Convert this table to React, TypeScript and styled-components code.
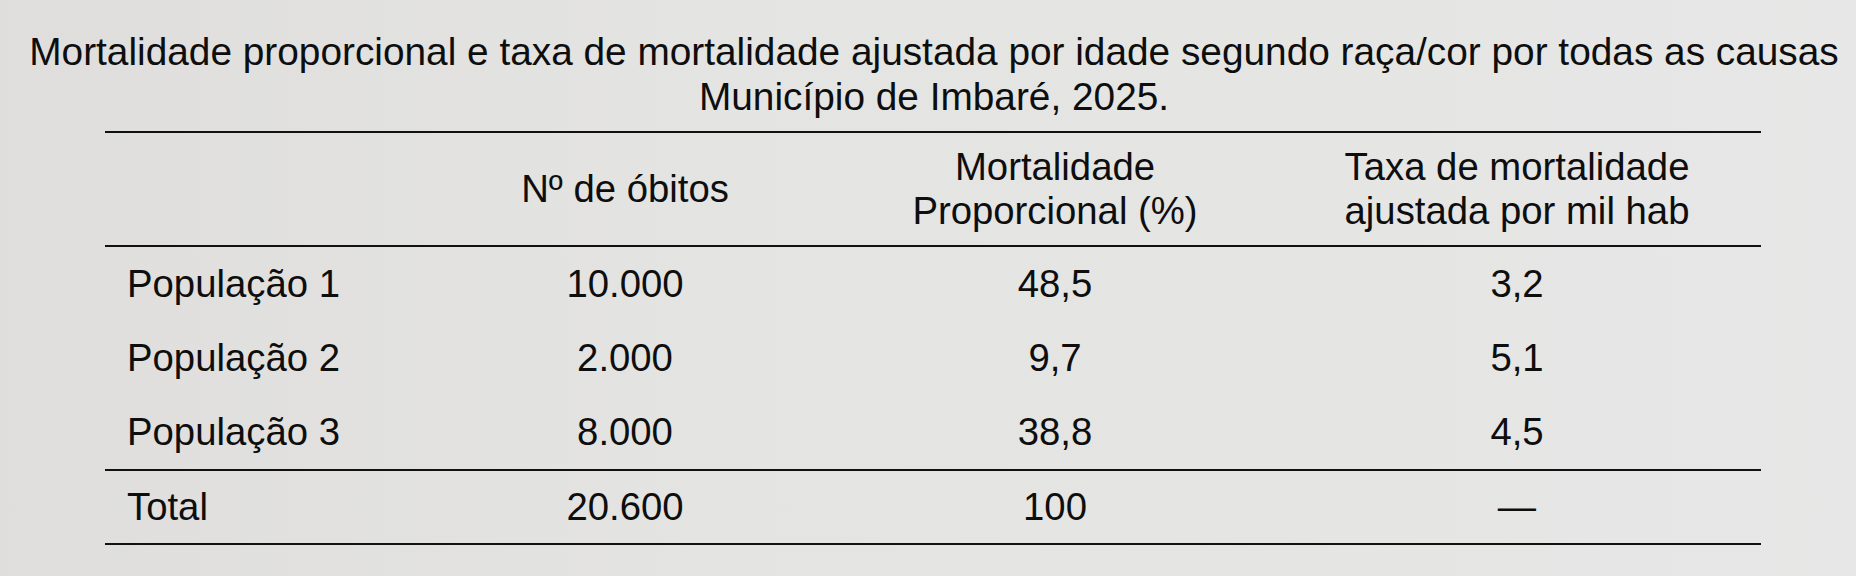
import React from "react";
import styled, { createGlobalStyle } from "styled-components";

const GlobalStyle = createGlobalStyle`
  html, body {
    margin: 0;
    padding: 0;
    background: #e3e3e1;
  }
  body {
    font-family: "Liberation Sans", Arial, Helvetica, sans-serif;
    color: #0e0e0e;
  }
`;

const Page = styled.div`
  width: 1856px;
  height: 576px;
  box-sizing: border-box;
  padding-top: 29px;
  background: linear-gradient(90deg, #dfdedc 0%, #e4e4e2 40%, #e6e7e6 100%);
  overflow: hidden;
`;

const Title = styled.h1`
  margin: 0 0 12px 12px;
  font-size: 38.8px;
  line-height: 45px;
  font-weight: 400;
  text-align: center;
  white-space: nowrap;
`;

const Table = styled.div`
  margin-left: 105px;
  width: 1656px;
  border-top: 2px solid #111;
`;

const Row = styled.div<{ $header?: boolean; $total?: boolean }>`
  display: grid;
  grid-template-columns: 308px 424px 436px 488px;
  align-items: center;
  height: ${(p) => (p.$header ? "112px" : p.$total ? "72px" : "74px")};
  font-size: 38.3px;
  line-height: ${(p) => (p.$header ? "44px" : p.$total ? "72px" : "74px")};
  border-bottom: ${(p) => (p.$header || p.$total ? "2px solid #111" : "none")};
  border-top: ${(p) => (p.$total ? "2px solid #111" : "none")};
`;

const LabelCell = styled.div`
  padding-left: 22px;
  text-align: left;
`;

const Cell = styled.div`
  text-align: center;
`;

type Data = [string, string, string, string];

const rows: Data[] = [
  ["População 1", "10.000", "48,5", "3,2"],
  ["População 2", "2.000", "9,7", "5,1"],
  ["População 3", "8.000", "38,8", "4,5"],
];

export default function App() {
  return (
    <Page>
      <GlobalStyle />
      <Title>
        Mortalidade proporcional e taxa de mortalidade ajustada por idade segundo raça/cor por todas as causas
        <br />
        Município de Imbaré, 2025.
      </Title>
      <Table>
        <Row $header>
          <LabelCell />
          <Cell>Nº de óbitos</Cell>
          <Cell>
            Mortalidade
            <br />
            Proporcional (%)
          </Cell>
          <Cell>
            Taxa de mortalidade
            <br />
            ajustada por mil hab
          </Cell>
        </Row>
        {rows.map((r) => (
          <Row key={r[0]}>
            <LabelCell>{r[0]}</LabelCell>
            <Cell>{r[1]}</Cell>
            <Cell>{r[2]}</Cell>
            <Cell>{r[3]}</Cell>
          </Row>
        ))}
        <Row $total>
          <LabelCell>Total</LabelCell>
          <Cell>20.600</Cell>
          <Cell>100</Cell>
          <Cell>—</Cell>
        </Row>
      </Table>
    </Page>
  );
}
